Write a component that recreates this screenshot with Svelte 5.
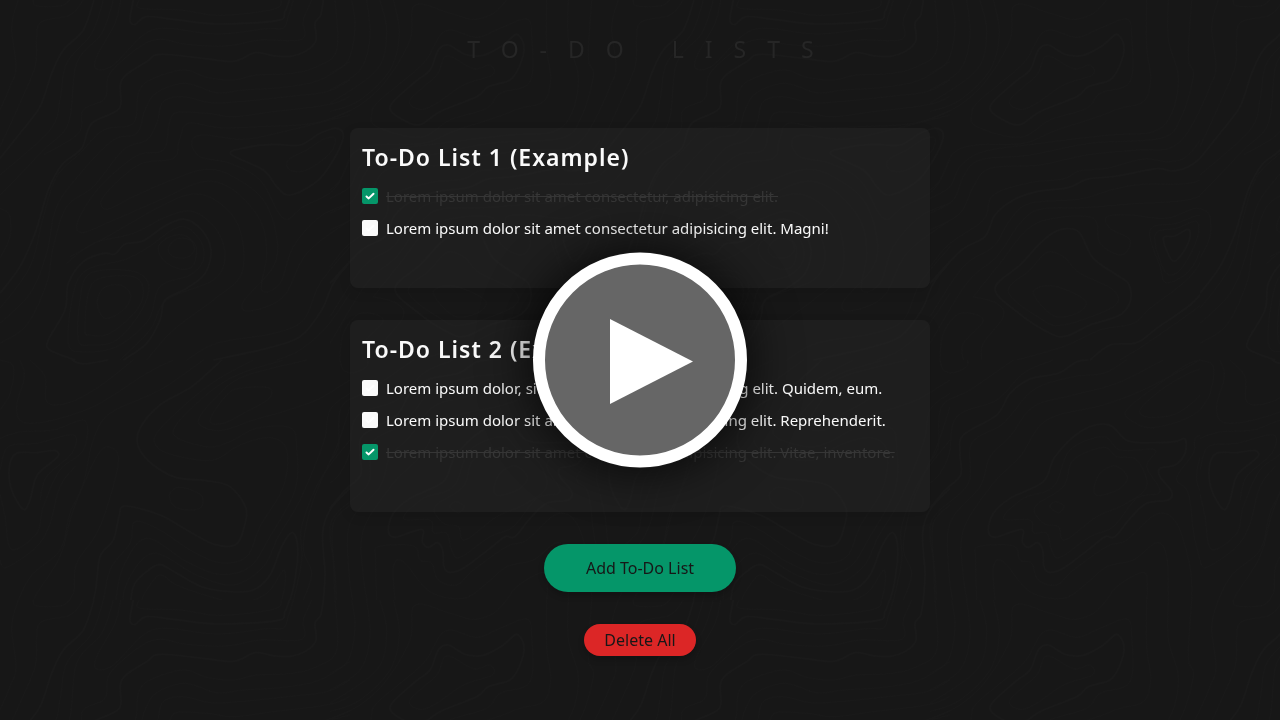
<script>
  let lists = $state([
    {
      title: 'To-Do List 1 (Example)',
      items: [
        { text: 'Lorem ipsum dolor sit amet consectetur, adipisicing elit.', done: true },
        { text: 'Lorem ipsum dolor sit amet consectetur adipisicing elit. Magni!', done: false }
      ]
    },
    {
      title: 'To-Do List 2 (Example)',
      items: [
        { text: 'Lorem ipsum dolor, sit amet consectetur adipisicing elit. Quidem, eum.', done: false },
        { text: 'Lorem ipsum dolor sit amet consectetur adipisicing elit. Reprehenderit.', done: false },
        { text: 'Lorem ipsum dolor sit amet consectetur adipisicing elit. Vitae, inventore.', done: true }
      ]
    }
  ]);

  // Contour lines of the background tile, grouped by quadrant.
  // Closed loops end with a trailing "z", heavy contours start with "!".
  const contours = [
    {
      x: 0, y: 0,
      lines: [
        '!282,0 250,90 190,150 155,220 120,320 60,400 0,475',
        '55,0 35,80 48,200 30,260 0,330',
        '250,0 210,45 125,65 110,110 105,200 55,320 0,440',
        '310,0 275,100 200,190 180,300 150,390 0,525',
        '340,0 305,100 230,190 205,370 130,450 45,540 0,585',
        '362,0 345,70 290,170 290,207 340,195 430,105 500,85 650,102 800,86 850,84 865,50 880,0',
        '!400,0 390,60 405,73 440,50 520,58 650,72 830,62 855,35 868,0',
        '418,0 420,25 540,30 660,46 820,28 845,0',
        '100,0 110,18 180,18 210,0',
        '935,0 910,60 905,118 780,120 680,138 560,133 480,118 420,140 330,220 315,295 250,330 235,400 130,465',
        '!970,0 962,45 945,70 948,120 920,152 870,169 820,167 765,158 700,184 600,174 480,163 440,185 365,240 358,325 275,370 245,445 185,495 145,570 105,700 60,800 0,880',
        '1005,0 1010,150 950,200 870,221 770,225 700,240 620,232 550,210 450,240 415,280 400,370 310,390 240,460 170,530 130,650 90,800 0,925',
        '1050,185 960,240 850,262 730,270 650,278 555,250 470,278 435,330 410,400 340,420 250,510 170,620 140,760 90,880 0,970',
        '1050,240 980,275 860,290 720,305 630,308 550,290 490,305 470,370 440,420 370,450 280,560 200,620 160,740 140,850 80,975 0,1030',
        '1050,290 980,315 820,335 700,350 620,340 530,338 508,370 490,450 410,467 300,560 235,660 245,698 330,665 480,600 610,545 700,570 780,660 800,760 785,870 840,850 880,740 960,650 1050,610',
        '1050,333 940,370 780,380 660,383 565,370 538,420 520,475 415,495 310,590 320,628 400,590 520,538 620,508 700,530 790,600 830,710 820,800 730,905 750,933 850,890 920,760 1050,660',
        '1050,345 850,395 730,418 610,405 575,425 600,470 690,490 780,540 850,655 910,620 1000,570 1050,480',
        '!692,462 740,442 820,433 900,435 960,400 1010,385 1030,410 1000,480 950,545 870,585 830,560 790,510z',
        '865,480 920,450 970,418 1005,415 990,460 920,510 870,510z',
        '200,790 280,730 400,700 500,650 580,635 650,690 675,770 640,840 500,900 450,990 360,1080',
        '210,770 330,705 480,620 580,582 660,610 720,690 725,820 640,900 520,990 440,1080',
        '!225,1080 150,1050 145,1020 195,930 205,850 250,785 310,760 345,762 375,732 430,722 500,675 555,658 605,690 633,750 615,820 560,865 495,900 480,960 440,1030 370,1080',
        '205,1030 220,880 260,810 370,780 440,745 540,680 600,720 610,780 570,825 480,860 445,960 350,1040 250,1055z',
        '235,1020 240,900 270,820 390,812 445,850 425,930 350,1020 270,1035z',
        '255,990 265,880 300,835 400,830 430,870 410,930 330,1000 270,1005z',
        '292,910 310,865 360,855 392,885 370,930 315,955z',
        '475,745 500,715 550,705 588,740 580,795 545,808 495,785z',
        '505,745 530,717 570,720 583,750 560,773 520,770z',
        '0,625 28,645 30,710 0,775',
        '!1050,785 1000,850 965,930 900,1010 800,1045 640,1080',
        '1050,740 960,850 910,960 820,1000 650,1030 560,1080',
        '1050,880 980,980 900,1050 830,1080'
      ]
    },
    {
      x: 0, y: 1080,
      lines: [
        '!215,0 250,12 325,0',
        '90,0 135,50 140,125 200,130 290,85 400,0',
        '60,0 73,50 50,140 70,187 160,180 290,135 440,40 520,0',
        '0,0 40,20 30,100 0,150',
        '0,235 60,216 160,210 255,182 250,270 180,330 130,440 110,520 35,568 15,470 0,400',
        '0,330 25,260 110,250 220,225 215,280 140,350 120,420',
        '!50,280 110,278 165,272 172,292 112,345 90,420 70,448 35,390 28,320z',
        '610,0 480,90 330,160 280,240 250,370 210,460 180,570 100,640 60,710 35,800 48,920 0,1045',
        '!665,0 575,80 480,135 420,205 415,260 460,315 530,353 620,362 690,380 738,445 730,510 705,555 640,552 560,510 480,465 375,438 357,470 340,540 300,590 285,700 250,810 190,870 155,940 90,1080',
        '760,0 650,60 560,130 470,220 475,265 540,290 640,300 720,255 810,233 860,270 850,380 780,500 740,590 660,608 570,570 480,510 405,485 390,550 330,630 300,760 240,870 190,1000 160,1080',
        '850,0 700,50 590,130 520,220 620,260 690,245 770,205 870,203 890,260 885,390 810,530 750,620 660,643 560,605 440,535 370,620 345,730 320,830 230,920 205,1080',
        '920,0 730,50 650,110 595,185 660,212 760,180 850,155 950,120 1010,85 1050,60',
        '630,180 680,105 720,85 805,83 808,115 740,155 670,190z',
        '510,400 540,382 603,405 600,445 545,448 515,430z',
        '1050,100 990,150 970,250 900,420 835,530 790,620 700,675 590,645 460,580 380,670 360,780 290,920 330,920 430,825 510,805 650,822 850,805 880,720 905,600 905,500 960,360 1050,240',
        '!390,780 400,680 440,635 480,614 530,640 610,682 690,695 760,690 810,645 845,560 875,518 892,550 888,640 865,735 835,780 720,788 640,792 520,780 440,770 405,793z',
        '418,740 440,690 480,645 530,675 630,710 720,728 800,700 852,630 850,700 815,750 650,768 430,746z',
        '!1050,385 990,450 968,520 975,640 970,720',
        '1050,435 1000,490 1000,600 1005,720',
        '1050,140 1010,260 940,420 910,560 935,640 910,720',
        '105,710 180,590 220,450 290,290 330,262 355,310 300,500 230,610 220,700 180,740 110,740z',
        '0,600 20,622 110,560 150,490 180,380 225,320'
      ]
    },
    {
      x: 990, y: 0,
      lines: [
        '65,0 75,80 55,180 0,220',
        '110,0 120,110 90,210 0,270',
        '150,0 170,100 140,210 0,310',
        '190,0 208,100 180,210 90,300 0,335',
        '530,0 490,40 430,58 360,40 255,15 240,120 170,240 90,315 0,358',
        '!180,320 250,250 300,210 325,150 355,135 405,163 460,166 520,135 560,103 582,140 570,195 540,240 475,260 440,290 330,335 270,374 220,360z',
        '240,300 320,225 350,168 430,206 480,195 487,225 400,255 320,310 270,328z',
        '125,340 150,300 280,190 345,93 440,112 510,85 590,57 605,110 600,245 510,280 470,325 360,360 270,412 140,380z',
        '650,0 650,140 662,240 640,305 570,325 490,355 380,390 280,430 140,435 70,460 30,540 0,570',
        '715,0 715,120 745,230 725,340 670,395 540,405 330,430 160,455 90,500 60,560 0,595',
        '785,0 775,170 790,230 750,360 690,415 480,430 300,465 150,480 100,530 70,600 0,640',
        '865,0 845,90 858,200 800,350 730,440 620,450 470,465 330,495 180,505 130,560 90,640 0,690',
        '1050,25 980,55 925,80 918,180 850,350 780,460 720,485 640,477 530,505 450,512 400,537 300,548 190,585 160,660 60,730 0,800',
        '!1050,105 990,165 950,270 925,325 850,420 820,465 775,500 725,513 680,506 560,528 470,538 415,563 320,575 250,600 195,645 165,710 95,750 0,850',
        '1050,150 1005,220 975,370 880,470 800,545 640,553 550,568 450,597 300,610 240,660 190,740 100,800 0,950',
        '1050,200 1010,390 930,450 860,550 780,598 600,612 460,623 330,628 270,670 200,770 110,850 0,1030',
        '130,890 210,790 290,690 370,655 490,655 510,730 575,765 600,720 540,685 530,650 600,645 710,655 800,625 840,660 830,740 780,830 660,925 610,970 510,990 400,1040 260,1080',
        '!195,865 270,795 330,730 375,695 415,686 450,700 490,775 560,825 595,850 602,900 570,945 480,975 410,1008 360,1000 260,935z',
        '235,875 300,810 350,758 400,770 450,820 550,870 550,920 400,975 330,955z',
        '310,880 350,857 410,870 468,905 440,940 370,947z',
        '!700,715 735,708 775,688 778,720 750,770 725,780z',
        '675,705 740,685 800,665 800,720 750,810 705,815z',
        '660,690 740,670 815,648 820,720 780,810 710,848 690,800z',
        '!1050,455 985,520 935,620 890,770 830,860 780,915 680,985 620,1028 540,1035 480,1080',
        '1050,500 990,560 940,680 910,800 830,900 650,1030 570,1080',
        '130,890 200,910 220,950 160,1030 155,1080',
        '30,1080 40,1000 90,940 160,960 100,1030 100,1080'
      ]
    },
    {
      x: 990, y: 1080,
      lines: [
        '30,0 40,30 70,38 110,20 112,0',
        '250,0 120,90 35,140 25,260 0,305',
        '370,0 280,40 200,120 80,170 58,280 30,340 0,370',
        '!475,0 440,5 385,40 300,57 240,100 200,165 100,225 90,280 92,345 45,390 0,445',
        '590,0 520,40 430,50 310,90 220,190 125,250 115,370 20,460 0,520 15,640 20,800 0,890',
        '700,0 560,70 430,105 310,140 240,230 180,290 150,380 60,490 58,650 75,790 50,900 0,940',
        '810,0 650,85 520,135 350,180 270,290 190,370 100,510 100,650 120,780 110,880 0,990',
        '590,150 690,70 790,5 850,20 840,110 780,170 670,203 610,185z',
        '630,150 700,85 800,30 828,45 815,100 740,160 660,172z',
        '!175,510 190,460 240,415 340,365 375,290 455,212 535,194 595,243 680,248 735,245 765,237 765,280 735,315 690,325 690,350 725,395 715,420 650,430 600,475 555,530 525,530 480,565 400,625 360,637 342,620 338,570 322,548 295,562 277,545 275,508 195,532z',
        '220,475 280,415 370,380 420,270 520,230 570,270 675,270 650,320 690,395 620,415 550,500 480,530 390,592 365,570 350,520 310,518 300,480z',
        '315,440 400,380 430,300 520,262 560,290 620,300 650,380 580,435 500,470 405,540 385,500 340,490z',
        '492,390 510,340 555,318 592,350 570,385 510,407z',
        '360,440 375,425 402,438 385,458z',
        '140,720 137,600 145,560 250,558 270,600 305,610 325,660 380,675 430,630 530,560 590,540 680,462 740,490 780,620 785,720',
        '195,720 190,620 220,605 300,695 400,715 470,670 530,620 610,600 680,548 710,590 715,720',
        '240,720 250,740 340,760 430,778 510,745 560,680 640,637 652,680 650,720',
        '1050,187 900,190 860,170 885,60 870,0',
        '1050,190 970,210 810,225 790,280 740,355 775,400 795,540 830,622 920,580 990,490 1050,350',
        '!860,280 920,278 975,272 982,292 922,345 900,420 880,448 845,390 838,320z',
        '850,255 960,245 1035,225 1025,280 945,350 920,500 840,568 825,430 800,360 815,280z'
      ]
    }
  ];

  // Turns a list of points into a smooth curve through all of them.
  function smooth(line) {
    const closed = line.endsWith('z');
    const pts = line
      .replace(/[!z]/g, '')
      .split(' ')
      .map((p) => p.split(',').map(Number));
    const n = pts.length;
    const at = (i) => (closed ? pts[(i + n) % n] : pts[Math.max(0, Math.min(n - 1, i))]);
    let d = `M${pts[0]}`;
    for (let i = 0; i < (closed ? n : n - 1); i++) {
      const [a, b, c, e] = [at(i - 1), at(i), at(i + 1), at(i + 2)];
      d += `C${b[0] + (c[0] - a[0]) / 6} ${b[1] + (c[1] - a[1]) / 6} ${c[0] - (e[0] - b[0]) / 6} ${c[1] - (e[1] - b[1]) / 6} ${c[0]} ${c[1]}`;
    }
    return d;
  }
</script>

<svg class="topography" aria-hidden="true">
  <defs>
    <pattern id="topo" width="600" height="600" patternUnits="userSpaceOnUse" viewBox="0 0 1800 1800">
      {#each contours as group}
        <g transform={`translate(${group.x} ${group.y})`}>
          {#each group.lines as line}
            <path class:heavy={line[0] === '!'} d={smooth(line)} />
          {/each}
        </g>
      {/each}
    </pattern>
  </defs>
  <rect width="100%" height="100%" fill="url(#topo)" />
</svg>

<main>
  <h1>TO-DO LISTS</h1>

  {#each lists as list}
    <section>
      <h2>{list.title}</h2>
      <ul>
        {#each list.items as item}
          <li>
            <label class:done={item.done}>
              <span class="box">
                <input type="checkbox" bind:checked={item.done} />
                <svg viewBox="0 0 16 16" aria-hidden="true"><path d="M4.500 8.500 6.700 10.400 11.500 5.800" /></svg>
              </span>
              <span class="text">{item.text}</span>
            </label>
          </li>
        {/each}
      </ul>
    </section>
  {/each}

  <button class="add" type="button">Add To-Do List</button>
  <button class="delete" type="button">Delete All</button>
</main>

<button class="play" type="button" aria-label="Play">
  <svg viewBox="0 0 214 216" aria-hidden="true">
    <ellipse cx="107" cy="108" rx="101" ry="101.500" />
    <path d="M77 67 160 109.500 77 152z" />
  </svg>
</button>

<style>
  :global(body) {
    background: #171717;
  }

  .topography {
    position: fixed;
    inset: 0;
    width: 100%;
    height: 100%;
    z-index: -1;
  }

  .topography path {
    fill: none;
    stroke: #191919;
    stroke-width: 3;
  }

  .topography path.heavy {
    stroke: #1a1a1a;
    stroke-width: 5;
  }

  main {
    box-sizing: border-box;
    max-width: 612px;
    margin: 0 auto;
    padding: 32px 16px 64px;
    display: flex;
    flex-direction: column;
    align-items: center;
    gap: 32px;
    color: #fafafa;
    font-family: 'Segoe UI', 'Noto Sans', 'Open Sans', sans-serif;
    font-size: 15px;
  }

  h1 {
    margin: 0 0 30px;
    padding-left: 22px;
    color: #262626;
    font-size: 23px;
    font-weight: 400;
    line-height: 34px;
    letter-spacing: 21px;
    white-space: nowrap;
  }

  section {
    box-sizing: border-box;
    width: 100%;
    padding: 16px 12px 44px;
    border-radius: 8px;
    background: rgba(38, 38, 38, 0.5);
    box-shadow: 0 4px 12px rgba(0, 0, 0, 0.1);
  }

  h2 {
    margin: 0 0 10px;
    font-size: 23px;
    font-weight: 600;
    line-height: 26px;
    letter-spacing: 1px;
  }

  ul {
    margin: 0;
    padding: 0;
    list-style: none;
  }

  label {
    display: flex;
    align-items: center;
    gap: 8px;
    min-height: 32px;
    line-height: 24px;
  }

  .done .text {
    color: #363636;
    text-decoration: line-through;
    text-decoration-thickness: 1px;
  }

  .box {
    display: grid;
    flex: none;
  }

  .box input,
  .box svg {
    grid-area: 1 / 1;
    width: 16px;
    height: 16px;
    margin: 0;
  }

  .box input {
    appearance: none;
    border-radius: 2px;
    background: #fafafa;
  }

  .box input:checked {
    background: #059669;
  }

  .box svg {
    pointer-events: none;
    fill: none;
    stroke: #fff;
    stroke-width: 2;
    stroke-linecap: round;
    stroke-linejoin: round;
  }

  .add,
  .delete {
    border: 0;
    border-radius: 24px;
    padding: 0;
    color: #171717;
    font: inherit;
    font-size: 16px;
    box-shadow: 0 4px 6px rgba(0, 0, 0, 0.2);
  }

  .add {
    width: 192px;
    height: 48px;
    background: #059669;
  }

  .delete {
    width: 112px;
    height: 32px;
    background: #dc2626;
  }

  .play {
    position: fixed;
    inset: 0;
    width: 214px;
    height: 216px;
    margin: auto;
    padding: 0;
    border: 0;
    border-radius: 50%;
    background: none;
    box-shadow: 0 0 48px 4px rgba(0, 0, 0, 0.7);
  }

  .play svg {
    display: block;
    width: 100%;
    height: 100%;
    fill: #fff;
  }

  .play ellipse {
    fill: #666;
    stroke: #fff;
    stroke-width: 12;
  }
</style>
